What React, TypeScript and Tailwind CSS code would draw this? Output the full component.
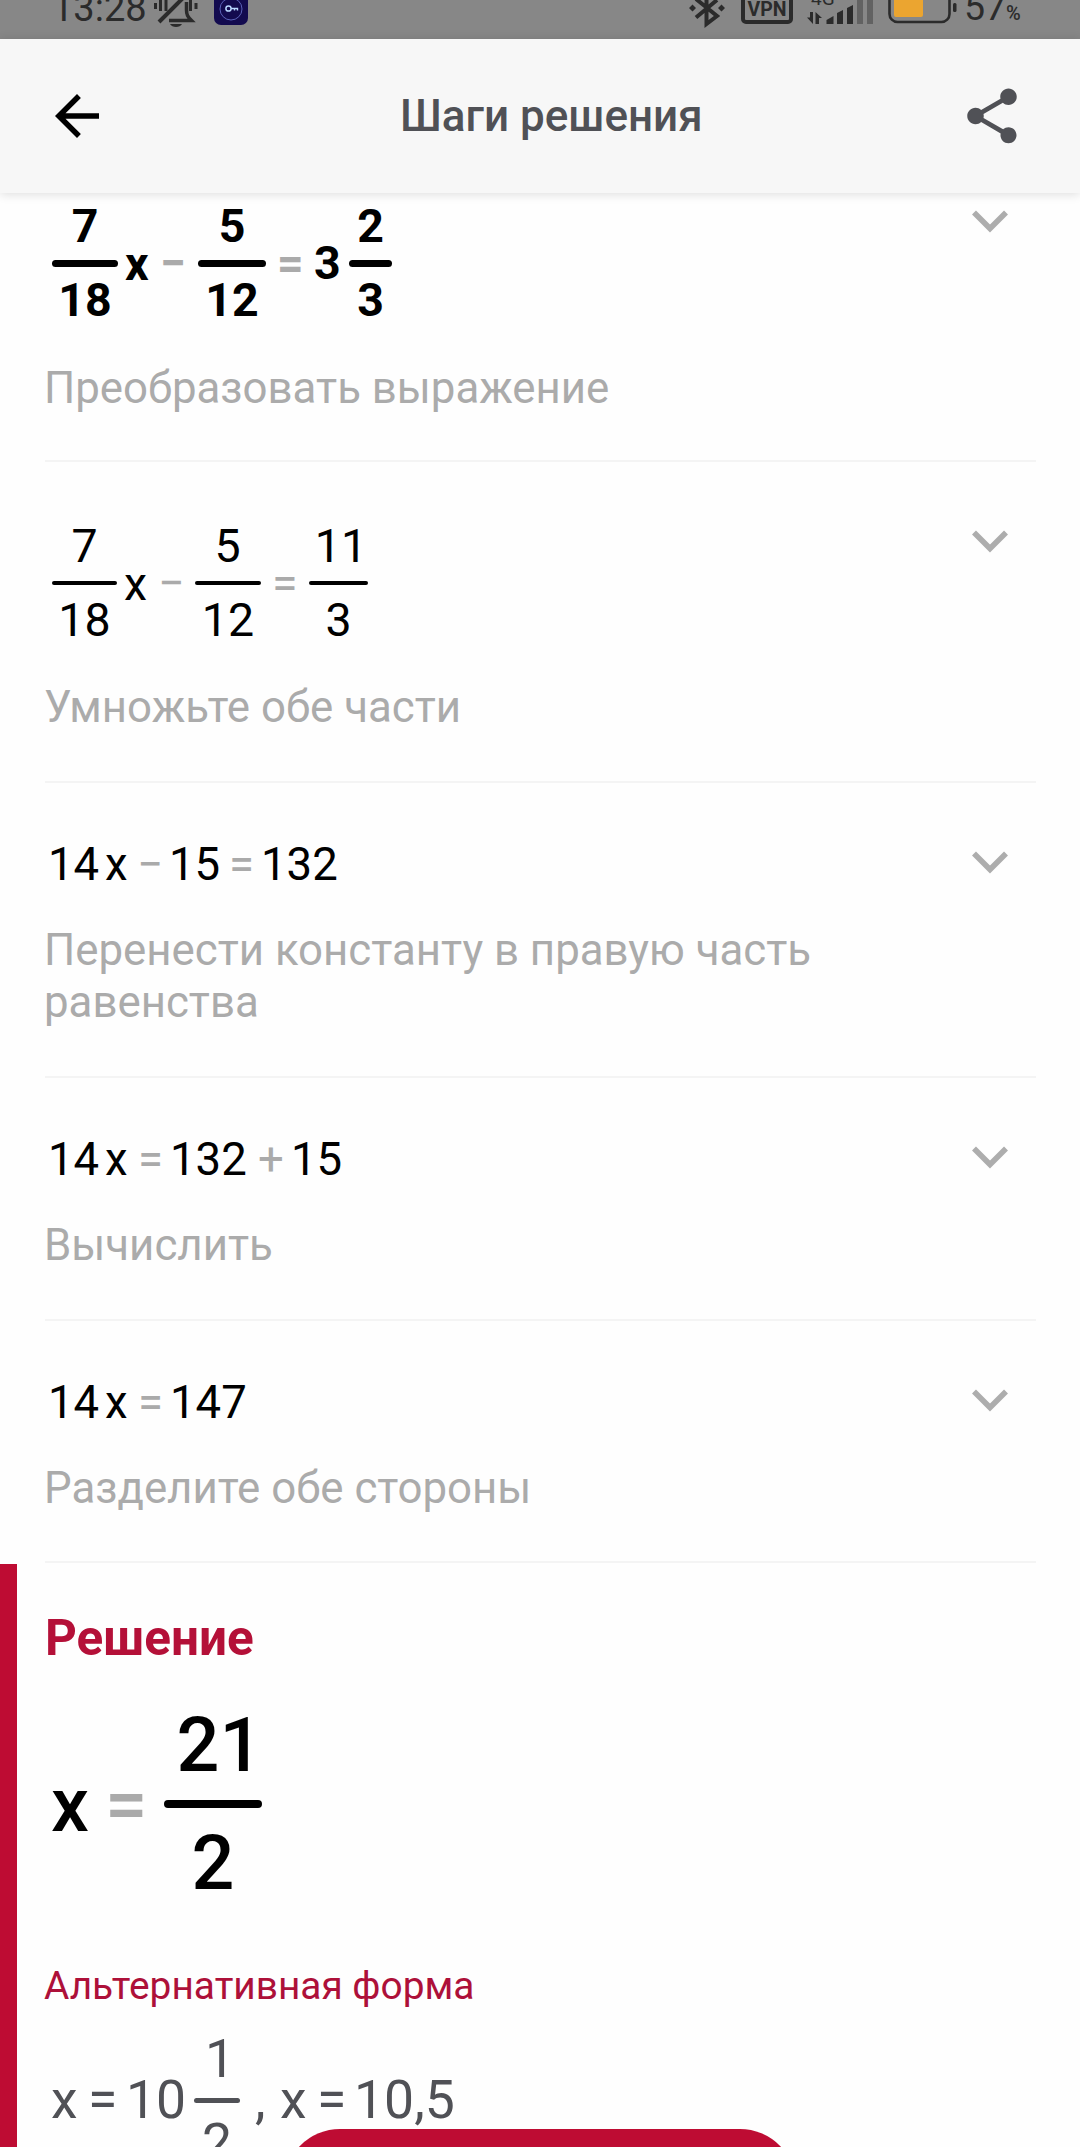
import { ReactNode } from "react";

import clsx from "clsx";
import { MdArrowBack, MdShare } from "react-icons/md";

type BoxProps = {
  children?: ReactNode;
  className?: string;
};

const Term = ({ children, className }: BoxProps) => (
  <span className={clsx("block shrink-0 leading-none whitespace-nowrap", className)}>{children}</span>
);

const Op = ({ children, className }: BoxProps) => (
  <span className={clsx("block shrink-0 leading-none whitespace-nowrap text-[#aaaaaa]", className)}>{children}</span>
);

type FractionProps = {
  top: string;
  bottom: string;
  className?: string;
  line?: string;
  topClassName?: string;
};

const Fraction = ({ top, bottom, className, line = "h-[4px] bg-black", topClassName }: FractionProps) => (
  <span className={clsx("flex shrink-0 flex-col items-center leading-none", className)}>
    <span className={topClassName}>{top}</span>
    <span className="flex h-[0.59em] w-full items-center">
      <span className={clsx("w-full rounded-full", line)} />
    </span>
    <span>{bottom}</span>
  </span>
);

const Chevron = () => (
  <svg className="mt-[66px] ml-[3px] h-[26px] w-[40px]" viewBox="0 0 40 26" fill="none" stroke="#adadad" strokeWidth="5.6">
    <path d="M4 4.5 20 20.500 36 4.5" />
  </svg>
);

type StepProps = {
  children: ReactNode;
  text: string;
  className?: string;
  mathClassName?: string;
};

const Step = ({ children, text, className, mathClassName }: StepProps) => (
  <div className={clsx("mr-[44px] ml-[45px] flex items-start border-b-2 border-[#f4f4f4]", className)}>
    <div className="w-[922px]">
      <div className={clsx("flex items-center text-black", mathClassName)}>{children}</div>
      <p className="-ml-px w-[800px] text-[43.8px] leading-[52px] text-[#ababab]">{text}</p>
    </div>
    <Chevron />
  </div>
);

const StatusBar = () => (
  <div className="flex h-[39px] items-start overflow-hidden bg-[#878787] pl-[52px] text-[#2b2b2b]">
    <span className="-mt-[11px] w-[101px] text-[38px] leading-none">13:28</span>
    <svg className="h-[30px] w-[46px]" viewBox="0 0 46 30" fill="none" stroke="#2b2b2b" strokeWidth="3">
      <path d="M2.5 3v6M7.500 0v11M37.500 0v11M43 3v6" />
      <path d="M6 22 31 -3" strokeWidth="4" />
      <path d="M16 20.500h22.500c-4-4-5-6-5-10.500V2" strokeWidth="3.500" />
      <path d="M13 11V0" />
      <path d="M17 24h12c-2 4-10 4-12 0z" fill="#2b2b2b" stroke="none" />
    </svg>
    <svg className="ml-[15px] h-[26px] w-[34px]" viewBox="0 0 34 26" fill="none">
      <rect y="-10" width="34" height="35" rx="7" fill="#130b4f" />
      <circle cx="17" cy="9" r="11" stroke="#5b62b8" />
      <circle cx="14.500" cy="8.500" r="2.600" stroke="#b9d8ff" strokeWidth="1.500" />
      <path d="M17 8.500h6.500v2M20.500 8.500v2" stroke="#b9d8ff" strokeWidth="1.400" />
    </svg>
    <svg className="ml-[441px] h-[30px] w-[37px]" viewBox="0 0 37 30" fill="none" stroke="#2b2b2b" strokeWidth="4">
      <path d="M7 17.500 28 0M7 -1 28 16 17.500 24V-8" />
      <path d="M3.500 4.500 7 8 3.500 11.500 0 8zM32.500 4.500 36 8 32.500 11.500 29 8z" fill="#2b2b2b" stroke="none" />
    </svg>
    <svg className="ml-[15px] h-[26px] w-[52px]" viewBox="0 0 52 26" fill="none">
      <rect x="2" y="-10" width="48" height="32" rx="3" stroke="#2b2b2b" strokeWidth="4" />
      <text x="26" y="15.500" textAnchor="middle" fill="#2b2b2b" className="font-[Roboto] text-[19.5px] font-bold">VPN</text>
    </svg>
    <svg className="ml-[13px] h-[26px] w-[69px]" viewBox="0 0 69 26" fill="#2b2b2b">
      <text x="5" y="5" className="font-[Roboto] text-[19px]">4G</text>
      <path d="M4 12h3v12L1 17.500h3zM9.500 24V12l6.500 6h-3v6z" />
      <path d="M20.500 24v-4l7-4v8zM31 24V13l6-3v14zM41 24V8l6-3v19z" />
      <path d="M51 0h6v24h-6zM61 0h6v24h-6z" fill="#626262" />
    </svg>
    <svg className="ml-[13px] h-[26px] w-[70px]" viewBox="0 0 70 26" fill="none">
      <rect x="1.500" y="-16" width="60" height="38" rx="8" stroke="#2b2b2b" strokeWidth="2.600" />
      <rect x="6" y="-10" width="29" height="27" rx="2" fill="#eba530" />
      <rect x="65" y="3" width="3.500" height="9" rx="1.500" fill="#2b2b2b" />
    </svg>
    <span className="-mt-[11px] ml-[6px] w-[42px] text-[37.5px] leading-none">57</span>
    <span className="mt-[3px] text-[20px] leading-none font-medium">%</span>
  </div>
);

const App = () => {
  return (
    <div className="relative h-[2147px] w-[1080px] overflow-hidden bg-[#fefefe] font-[Roboto,sans-serif]">
      <StatusBar />

      <header className="relative z-10 flex h-[154px] items-center bg-[#f7f7f7] pr-[55px] pl-[44px] shadow-[0_1px_10px_rgba(0,0,0,0.14)]">
        <MdArrowBack size={66} className="text-black" />
        <h1 className="ml-[290px] text-[44px] leading-none font-medium text-[#505156]">Шаги решения</h1>
        <MdShare size={66} className="ml-auto text-[#505156]" />
      </header>

      <main className="-mt-[51px]">
        <Step
          text="Преобразовать выражение"
          className="h-[320px]"
          mathClassName="h-[220px] pt-[23px] pl-[7px] text-[46.5px] font-bold"
        >
          <Fraction top="7" bottom="18" className="w-[66px]" line="h-[7px] bg-black" />
          <Term className="ml-[7px] w-[35px] pt-px">x</Term>
          <Op className="w-[38px]">−</Op>
          <Fraction top="5" bottom="12" className="w-[68px]" line="h-[7px] bg-black" />
          <Op className="ml-[11px] w-[37px]">=</Op>
          <Term className="w-[35px]">3</Term>
          <Fraction top="2" bottom="3" className="w-[43px]" line="h-[7px] bg-black" />
        </Step>

        <Step
          text="Умножьте обе части"
          className="h-[321px]"
          mathClassName="h-[219px] pt-[23px] pl-[7px] text-[46.5px]"
        >
          <Fraction top="7" bottom="18" className="w-[65px]" />
          <Term className="ml-[7px] w-[34px] pt-[2px]">x</Term>
          <Op className="w-[37px]">−</Op>
          <Fraction top="5" bottom="12" className="w-[66px]" topClassName="-ml-px" />
          <Op className="ml-[11px] w-[37px]">=</Op>
          <Fraction top="11" bottom="3" className="w-[59px]" topClassName="ml-[5px]" />
        </Step>

        <Step
          text="Перенести константу в правую часть равенства"
          className="h-[295px]"
          mathClassName="h-[141px] pt-[23px] pl-[3px] text-[45.5px]"
        >
          <Term className="w-[57px]">14</Term>
          <Term className="w-[32px]">x</Term>
          <Op className="w-[32px]">−</Op>
          <Term className="w-[60px]">15</Term>
          <Op className="w-[32px]">=</Op>
          <Term>132</Term>
        </Step>

        <Step
          text="Вычислить"
          className="h-[243px]"
          mathClassName="h-[141px] pt-[23px] pl-[3px] text-[45.5px]"
        >
          <Term className="w-[57px]">14</Term>
          <Term className="w-[33px]">x</Term>
          <Op className="w-[32px]">=</Op>
          <Term className="w-[88px]">132</Term>
          <Op className="w-[33px]">+</Op>
          <Term>15</Term>
        </Step>

        <Step
          text="Разделите обе стороны"
          className="h-[242px]"
          mathClassName="h-[141px] pt-[23px] pl-[3px] text-[45.5px]"
        >
          <Term className="w-[57px]">14</Term>
          <Term className="w-[33px]">x</Term>
          <Op className="w-[32px]">=</Op>
          <Term>147</Term>
        </Step>

        <section className="mt-px h-[620px] border-l-[17px] border-[#be0c33] pl-[27px]">
          <h2 className="pt-[49px] pl-px text-[49.5px] leading-[50px] font-bold text-[#b41038]">Решение</h2>
          <div className="mt-[41px] flex h-[200px] items-center pl-[7px] text-[75.5px] font-medium text-black">
            <Term className="w-[54px] pt-[3px]">x</Term>
            <Op className="w-[59px] pt-[2px]">=</Op>
            <Fraction
              top="21"
              bottom="2"
              className="w-[98px]"
              line="h-[8px] bg-black"
              topClassName="relative top-[2px] ml-[13px]"
            />
          </div>
          <h3 className="mt-[63px] text-[38.85px] leading-[38px] text-[#ad1039]">Альтернативная форма</h3>
          <div className="mt-[5px] flex h-[180px] items-center pl-[7px] text-[53.5px] text-[#505156]">
            <Term className="w-[37px]">x</Term>
            <Term className="w-[38px]">=</Term>
            <Term className="w-[68px]">10</Term>
            <Fraction
              top="1"
              bottom="2"
              className="w-[46px]"
              line="h-[5px] bg-[#505156]"
              topClassName="relative top-px ml-[6px]"
            />
            <Term className="ml-[15px] w-[25px]">,</Term>
            <Term className="w-[37px]">x</Term>
            <Term className="w-[37px]">=</Term>
            <Term>10,5</Term>
          </div>
        </section>
      </main>

      <button className="absolute top-[2129px] left-[284px] h-[112px] w-[512px] rounded-full bg-[#be0c33]" />
    </div>
  );
};

export default App;
